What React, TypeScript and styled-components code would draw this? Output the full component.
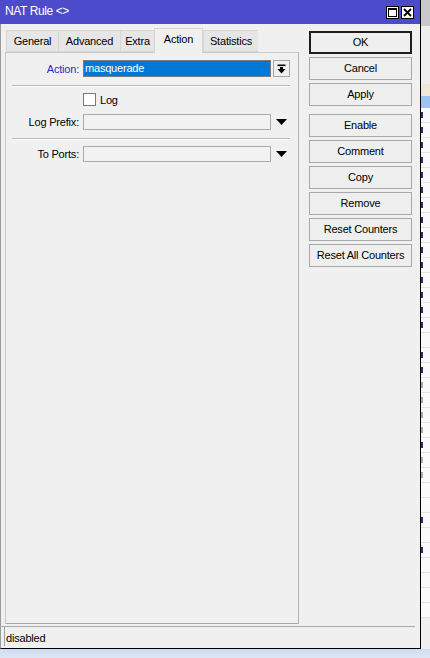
import React from "react";
import styled, { createGlobalStyle } from "styled-components";

const GlobalStyle = createGlobalStyle`
    html, body {
        margin: 0;
        padding: 0;
        background: #d9e4f4;
    }
    body {
        font-family: "Liberation Sans", Arial, sans-serif;
        font-size: 11px;
        color: #000;
    }
`;

const Page = styled.div`
    width: 430px;
    height: 658px;
    display: grid;
    grid-template-columns: 421px 9px;
    grid-template-rows: 649px 9px;
    overflow: hidden;
`;

const Window = styled.div`
    box-sizing: border-box;
    border-right: 1px solid #000;
    border-bottom: 1px solid #000;
    border-left: 1px solid #9a9a9a;
    background: #f0f0f0;
    display: flex;
    flex-direction: column;
    letter-spacing: -0.2px;
`;

const TitleBar = styled.div`
    height: 24px;
    flex: 0 0 auto;
    background: #4b4bcb;
    color: #fff;
    font-size: 12px;
    display: flex;
    align-items: center;
    padding: 0 6px 0 5px;
    margin-left: -1px;
`;

const Title = styled.div`
    flex: 1 1 auto;
    padding-bottom: 2px;
    letter-spacing: -0.4px;
`;

const TitleButton = styled.div`
    width: 13px;
    height: 13px;
    box-sizing: border-box;
    background: #fff;
    border: 1px solid #000;
    margin-left: 2px;
    display: flex;
    align-items: center;
    justify-content: center;
`;

const Body = styled.div`
    flex: 1 1 auto;
    display: flex;
    padding: 4px 0 0 4px;
    min-height: 0;
`;

const TabArea = styled.div`
    width: 294px;
    display: flex;
    flex-direction: column;
`;

const TabStrip = styled.div`
    height: 24px;
    display: flex;
    align-items: flex-end;
    padding-left: 1px;
    position: relative;
    z-index: 1;
`;

const Tab = styled.div<{ $active?: boolean; $w: number }>`
    box-sizing: border-box;
    width: ${(p) => p.$w}px;
    height: ${(p) => (p.$active ? 25 : 22)}px;
    margin-bottom: ${(p) => (p.$active ? -1 : 0)}px;
    background: ${(p) => (p.$active ? "#f0f0f0" : "#e6e6e6")};
    border: 1px solid #d6d6d6;
    border-bottom: ${(p) => (p.$active ? "none" : "1px solid #d6d6d6")};
    border-right-width: ${(p) => (p.$active ? 1 : 0)}px;
    display: flex;
    align-items: center;
    justify-content: center;
    padding-bottom: ${(p) => (p.$active ? 4 : 1)}px;
`;

const Panel = styled.div`
    flex: 1 1 auto;
    box-sizing: border-box;
    border: 1px solid #c9c9c9;
    border-right-color: #b4b4b4;
    border-bottom-color: #a8a8a8;
    background: #f0f0f0;
    padding: 7px 0 0 1px;
    display: flex;
    flex-direction: column;
`;

const Row = styled.div<{ $top?: number }>`
    display: flex;
    align-items: center;
    height: 17px;
    margin-top: ${(p) => p.$top ?? 0}px;
`;

const Label = styled.div<{ $accent?: boolean }>`
    width: 72px;
    margin-right: 4px;
    text-align: right;
    color: ${(p) => (p.$accent ? "#2b2bc4" : "#000")};
`;

const Field = styled.div<{ $selected?: boolean }>`
    box-sizing: border-box;
    width: 188px;
    height: ${(p) => (p.$selected ? 17 : 16)}px;
    border: 1px solid ${(p) => (p.$selected ? "#7a7a7a" : "#ababab")};
    background: ${(p) => (p.$selected ? "#0078d7" : "#f2f2f2")};
    color: #fff;
    display: flex;
    align-items: center;
    padding: 0 1px 1px;
    font-size: 11px;
`;

const DropButton = styled.div`
    box-sizing: border-box;
    width: 17px;
    height: 17px;
    margin-left: 2px;
    border: 1px solid #a6a6a6;
    background: #f0f0f0;
    display: flex;
    align-items: center;
    justify-content: center;
`;

const DropArrow = styled.div`
    width: 17px;
    height: 17px;
    margin-left: 2px;
    display: flex;
    align-items: center;
    justify-content: center;
`;

const Separator = styled.div<{ $top: number }>`
    height: 1px;
    width: 278px;
    margin: ${(p) => p.$top}px 0 0 5px;
    background: #b9b9b9;
    border-bottom: 1px solid #fdfdfd;
`;

const CheckBox = styled.div`
    box-sizing: border-box;
    width: 13px;
    height: 13px;
    margin-left: 76px;
    background: #fff;
    border: 1px solid #7a7a7a;
`;

const CheckLabel = styled.span`
    margin-left: 4px;
`;

const ButtonColumn = styled.div`
    width: 103px;
    margin-left: 10px;
    padding-top: 3px;
    display: flex;
    flex-direction: column;
    gap: 3px;
`;

const Button = styled.div<{ $default?: boolean; $gapBefore?: number }>`
    box-sizing: border-box;
    height: 23px;
    border: ${(p) => (p.$default ? "2px solid #1e1e1e" : "1px solid #a8a8a8")};
    background: #efefef;
    display: flex;
    align-items: center;
    justify-content: center;
    margin-top: ${(p) => p.$gapBefore ?? 0}px;
    padding-bottom: 1px;
`;

const StatusLine = styled.div`
    height: 1px;
    width: 415px;
    margin-top: 2px;
    margin-left: -1px;
    background: #a8a8a8;
`;

const StatusBar = styled.div`
    height: 21px;
    display: flex;
    align-items: stretch;
    padding-left: 3px;
`;

const StatusCell = styled.div`
    border-left: 1px solid #a0a0a0;
    padding: 2px 0 0 1px;
    display: flex;
    align-items: center;
    margin-bottom: 2px;
`;

const BackStrip = styled.div`
    background: #f0f0f0;
    display: flex;
    flex-direction: column;
    overflow: hidden;
`;

const StripBlock = styled.div<{ $h: number; $bg: string }>`
    height: ${(p) => p.$h}px;
    background: ${(p) => p.$bg};
    flex: 0 0 auto;
`;

const StripRow = styled.div<{ $mark?: boolean; $faint?: boolean }>`
    height: 15px;
    flex: 0 0 auto;
    box-sizing: border-box;
    border-bottom: 1px solid #e2e2e2;
    background: #fafafa;
    position: relative;
    &::before {
        content: "";
        display: ${(p) => (p.$mark ? "block" : "none")};
        position: absolute;
        left: 0;
        top: 4px;
        width: 2px;
        height: 6px;
        background: ${(p) => (p.$faint ? "#a4a8bc" : "#2a2f6a")};
    }
`;

const BottomBand = styled.div`
    grid-column: 1 / span 2;
    background: linear-gradient(#cfdcf0, #dde7f5);
`;

const ActionIcon = () => (
    <svg width="9" height="10" viewBox="0 0 9 10">
        <rect x="0.5" y="0.5" width="8" height="1.6" fill="#000" />
        <rect x="3" y="3" width="3" height="2.5" fill="#000" />
        <polygon points="0.5,5 8.5,5 4.5,9.5" fill="#000" />
    </svg>
);

const Triangle = () => (
    <svg width="11" height="6" viewBox="0 0 11 6">
        <polygon points="0,0 11,0 5.5,6" fill="#000" />
    </svg>
);

const tabs = [
    { name: "General", w: 52 },
    { name: "Advanced", w: 62 },
    { name: "Extra", w: 34 },
    { name: "Action", w: 49, active: true },
    { name: "Statistics", w: 55 },
];

const buttons: { label: string; isDefault?: boolean; gap?: number }[] = [
    { label: "OK", isDefault: true },
    { label: "Cancel" },
    { label: "Apply" },
    { label: "Enable", gap: 5 },
    { label: "Comment" },
    { label: "Copy" },
    { label: "Remove" },
    { label: "Reset Counters" },
    { label: "Reset All Counters" },
];

// 1 = dark mark, 2 = faint mark, 0 = empty row
const marks = [
    1, 1, 1, 1, 1, 1, 1, 1, 1, 1, 1, 1, 1, 1, 1, 0, 1, 1, 2, 2, 2, 2, 1, 2, 2, 0, 0, 1, 0, 1, 0, 0, 0, 0,
];

export default function App() {
    return (
        <>
            <GlobalStyle />
            <Page>
                <Window>
                    <TitleBar>
                        <Title>NAT Rule &lt;&gt;</Title>
                        <TitleButton>
                            <svg width="9" height="9" viewBox="0 0 9 9">
                                <rect x="0.5" y="0.5" width="8" height="8" fill="none" stroke="#000" />
                                <rect x="0.5" y="0.5" width="8" height="1.5" fill="#000" />
                            </svg>
                        </TitleButton>
                        <TitleButton>
                            <svg width="9" height="9" viewBox="0 0 9 9">
                                <path d="M1 1 L8 8 M8 1 L1 8" stroke="#000" strokeWidth="1.8" />
                            </svg>
                        </TitleButton>
                    </TitleBar>
                    <Body>
                        <TabArea>
                            <TabStrip>
                                {tabs.map((t) => (
                                    <Tab key={t.name} $w={t.w} $active={t.active}>
                                        {t.name}
                                    </Tab>
                                ))}
                            </TabStrip>
                            <Panel>
                                <Row>
                                    <Label $accent>Action:</Label>
                                    <Field $selected>masquerade</Field>
                                    <DropButton>
                                        <ActionIcon />
                                    </DropButton>
                                </Row>
                                <Separator $top={8} />
                                <Row $top={4}>
                                    <CheckBox />
                                    <CheckLabel>Log</CheckLabel>
                                </Row>
                                <Row $top={5}>
                                    <Label>Log Prefix:</Label>
                                    <Field />
                                    <DropArrow>
                                        <Triangle />
                                    </DropArrow>
                                </Row>
                                <Separator $top={8} />
                                <Row $top={5}>
                                    <Label>To Ports:</Label>
                                    <Field />
                                    <DropArrow>
                                        <Triangle />
                                    </DropArrow>
                                </Row>
                            </Panel>
                        </TabArea>
                        <ButtonColumn>
                            {buttons.map((b) => (
                                <Button key={b.label} $default={b.isDefault} $gapBefore={b.gap}>
                                    {b.label}
                                </Button>
                            ))}
                        </ButtonColumn>
                    </Body>
                    <StatusLine />
                    <StatusBar>
                        <StatusCell>disabled</StatusCell>
                    </StatusBar>
                </Window>
                <BackStrip>
                    <StripBlock $h={26} $bg="#c9c9c9" />
                    <StripBlock $h={58} $bg="#eeeeee" />
                    <StripBlock $h={12} $bg="#efe8d8" />
                    <StripBlock $h={12} $bg="#9fc3ef" />
                    {marks.map((m, i) => (
                        <StripRow key={i} $mark={m > 0} $faint={m === 2} />
                    ))}
                </BackStrip>
                <BottomBand />
            </Page>
        </>
    );
}
